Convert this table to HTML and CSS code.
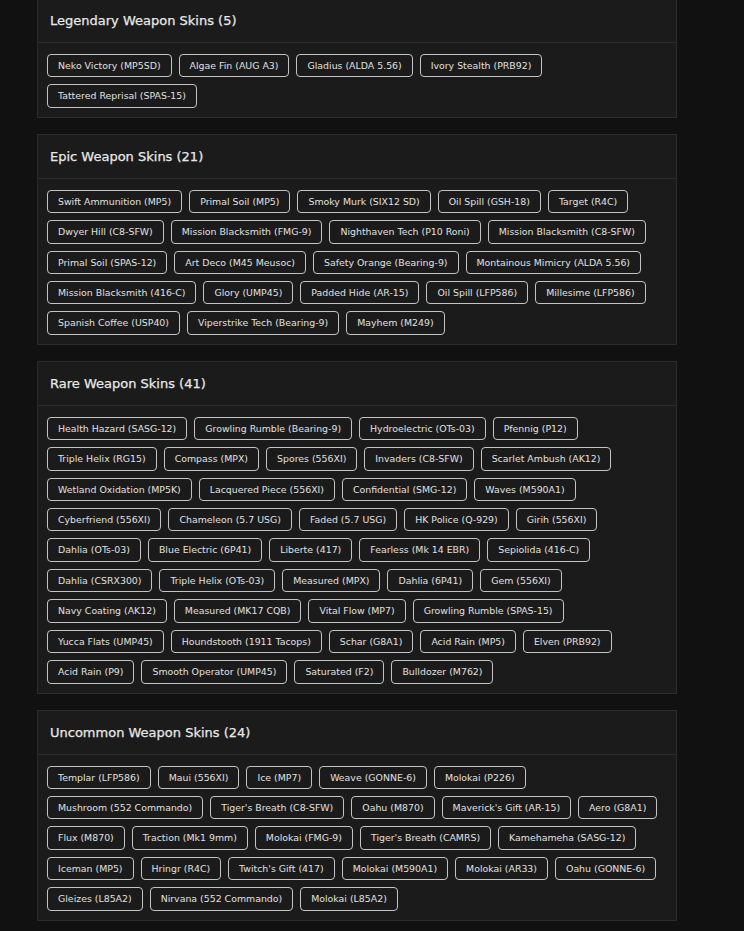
FILE: index.html
```html
<!DOCTYPE html>
<html lang="en">
<head>
<meta charset="utf-8">
<title>Weapon Skins</title>
<link rel="stylesheet" href="styles.css">
</head>
<body>
<main class="page">
  <section class="panel">
    <h2 class="panel-title">Legendary Weapon Skins (5)</h2>
    <div class="tags">
      <span class="tag">Neko Victory (MP5SD)</span>
      <span class="tag">Algae Fin (AUG A3)</span>
      <span class="tag">Gladius (ALDA 5.56)</span>
      <span class="tag">Ivory Stealth (PRB92)</span>
      <span class="tag">Tattered Reprisal (SPAS-15)</span>
    </div>
  </section>

  <section class="panel">
    <h2 class="panel-title">Epic Weapon Skins (21)</h2>
    <div class="tags">
      <span class="tag">Swift Ammunition (MP5)</span>
      <span class="tag">Primal Soil (MP5)</span>
      <span class="tag">Smoky Murk (SIX12 SD)</span>
      <span class="tag">Oil Spill (GSH-18)</span>
      <span class="tag">Target (R4C)</span>
      <span class="tag">Dwyer Hill (C8-SFW)</span>
      <span class="tag">Mission Blacksmith (FMG-9)</span>
      <span class="tag">Nighthaven Tech (P10 Roni)</span>
      <span class="tag">Mission Blacksmith (C8-SFW)</span>
      <span class="tag">Primal Soil (SPAS-12)</span>
      <span class="tag">Art Deco (M45 Meusoc)</span>
      <span class="tag">Safety Orange (Bearing-9)</span>
      <span class="tag">Montainous Mimicry (ALDA 5.56)</span>
      <span class="tag">Mission Blacksmith (416-C)</span>
      <span class="tag">Glory (UMP45)</span>
      <span class="tag">Padded Hide (AR-15)</span>
      <span class="tag">Oil Spill (LFP586)</span>
      <span class="tag">Millesime (LFP586)</span>
      <span class="tag">Spanish Coffee (USP40)</span>
      <span class="tag">Viperstrike Tech (Bearing-9)</span>
      <span class="tag">Mayhem (M249)</span>
    </div>
  </section>

  <section class="panel">
    <h2 class="panel-title">Rare Weapon Skins (41)</h2>
    <div class="tags">
      <span class="tag">Health Hazard (SASG-12)</span>
      <span class="tag">Growling Rumble (Bearing-9)</span>
      <span class="tag">Hydroelectric (OTs-03)</span>
      <span class="tag">Pfennig (P12)</span>
      <span class="tag">Triple Helix (RG15)</span>
      <span class="tag">Compass (MPX)</span>
      <span class="tag">Spores (556XI)</span>
      <span class="tag">Invaders (C8-SFW)</span>
      <span class="tag">Scarlet Ambush (AK12)</span>
      <span class="tag">Wetland Oxidation (MP5K)</span>
      <span class="tag">Lacquered Piece (556XI)</span>
      <span class="tag">Confidential (SMG-12)</span>
      <span class="tag">Waves (M590A1)</span>
      <span class="tag">Cyberfriend (556XI)</span>
      <span class="tag">Chameleon (5.7 USG)</span>
      <span class="tag">Faded (5.7 USG)</span>
      <span class="tag">HK Police (Q-929)</span>
      <span class="tag">Girih (556XI)</span>
      <span class="tag">Dahlia (OTs-03)</span>
      <span class="tag">Blue Electric (6P41)</span>
      <span class="tag">Liberte (417)</span>
      <span class="tag">Fearless (Mk 14 EBR)</span>
      <span class="tag">Sepiolida (416-C)</span>
      <span class="tag">Dahlia (CSRX300)</span>
      <span class="tag">Triple Helix (OTs-03)</span>
      <span class="tag">Measured (MPX)</span>
      <span class="tag">Dahlia (6P41)</span>
      <span class="tag">Gem (556XI)</span>
      <span class="tag">Navy Coating (AK12)</span>
      <span class="tag">Measured (MK17 CQB)</span>
      <span class="tag">Vital Flow (MP7)</span>
      <span class="tag">Growling Rumble (SPAS-15)</span>
      <span class="tag">Yucca Flats (UMP45)</span>
      <span class="tag">Houndstooth (1911 Tacops)</span>
      <span class="tag">Schar (G8A1)</span>
      <span class="tag">Acid Rain (MP5)</span>
      <span class="tag">Elven (PRB92)</span>
      <span class="tag">Acid Rain (P9)</span>
      <span class="tag">Smooth Operator (UMP45)</span>
      <span class="tag">Saturated (F2)</span>
      <span class="tag">Bulldozer (M762)</span>
    </div>
  </section>

  <section class="panel">
    <h2 class="panel-title">Uncommon Weapon Skins (24)</h2>
    <div class="tags">
      <span class="tag">Templar (LFP586)</span>
      <span class="tag">Maui (556XI)</span>
      <span class="tag">Ice (MP7)</span>
      <span class="tag">Weave (GONNE-6)</span>
      <span class="tag">Molokai (P226)</span>
      <span class="tag">Mushroom (552 Commando)</span>
      <span class="tag">Tiger's Breath (C8-SFW)</span>
      <span class="tag">Oahu (M870)</span>
      <span class="tag">Maverick's Gift (AR-15)</span>
      <span class="tag">Aero (G8A1)</span>
      <span class="tag">Flux (M870)</span>
      <span class="tag">Traction (Mk1 9mm)</span>
      <span class="tag">Molokai (FMG-9)</span>
      <span class="tag">Tiger's Breath (CAMRS)</span>
      <span class="tag">Kamehameha (SASG-12)</span>
      <span class="tag">Iceman (MP5)</span>
      <span class="tag">Hringr (R4C)</span>
      <span class="tag">Twitch's Gift (417)</span>
      <span class="tag">Molokai (M590A1)</span>
      <span class="tag">Molokai (AR33)</span>
      <span class="tag">Oahu (GONNE-6)</span>
      <span class="tag">Gleizes (L85A2)</span>
      <span class="tag">Nirvana (552 Commando)</span>
      <span class="tag">Molokai (L85A2)</span>
    </div>
  </section>
</main>
</body>
</html>
```

FILE: styles.css
```css
html, body {
  margin: 0;
  padding: 0;
  background: #111111;
}

body {
  font-family: "DejaVu Sans", "Open Sans", sans-serif;
  color: #e2e2e2;
}

.page {
  width: 640px;
  margin: -2px 0 0 37px;
  display: flex;
  flex-direction: column;
  gap: 16px;
  padding-bottom: 20px;
}

.panel {
  background: #1b1b1b;
  border: 1px solid #2c2c2c;
}

.panel-title {
  margin: 0;
  height: 43px;
  display: flex;
  align-items: center;
  padding: 0 12px;
  border-bottom: 1px solid #2c2c2c;
  font-size: 13px;
  font-weight: 500;
  color: #e8e8e8;
  -webkit-text-stroke: 0.25px #e8e8e8;
}

.tags {
  display: flex;
  flex-wrap: wrap;
  gap: 7px;
  padding: 11px 9px 9px;
}

.tag {
  font-size: 9.4px;
  line-height: 15.4px;
  padding: 3px 10px;
  border: 1px solid #c4c4c4;
  border-radius: 4px;
  color: #e0e0e0;
  white-space: nowrap;
}
```
